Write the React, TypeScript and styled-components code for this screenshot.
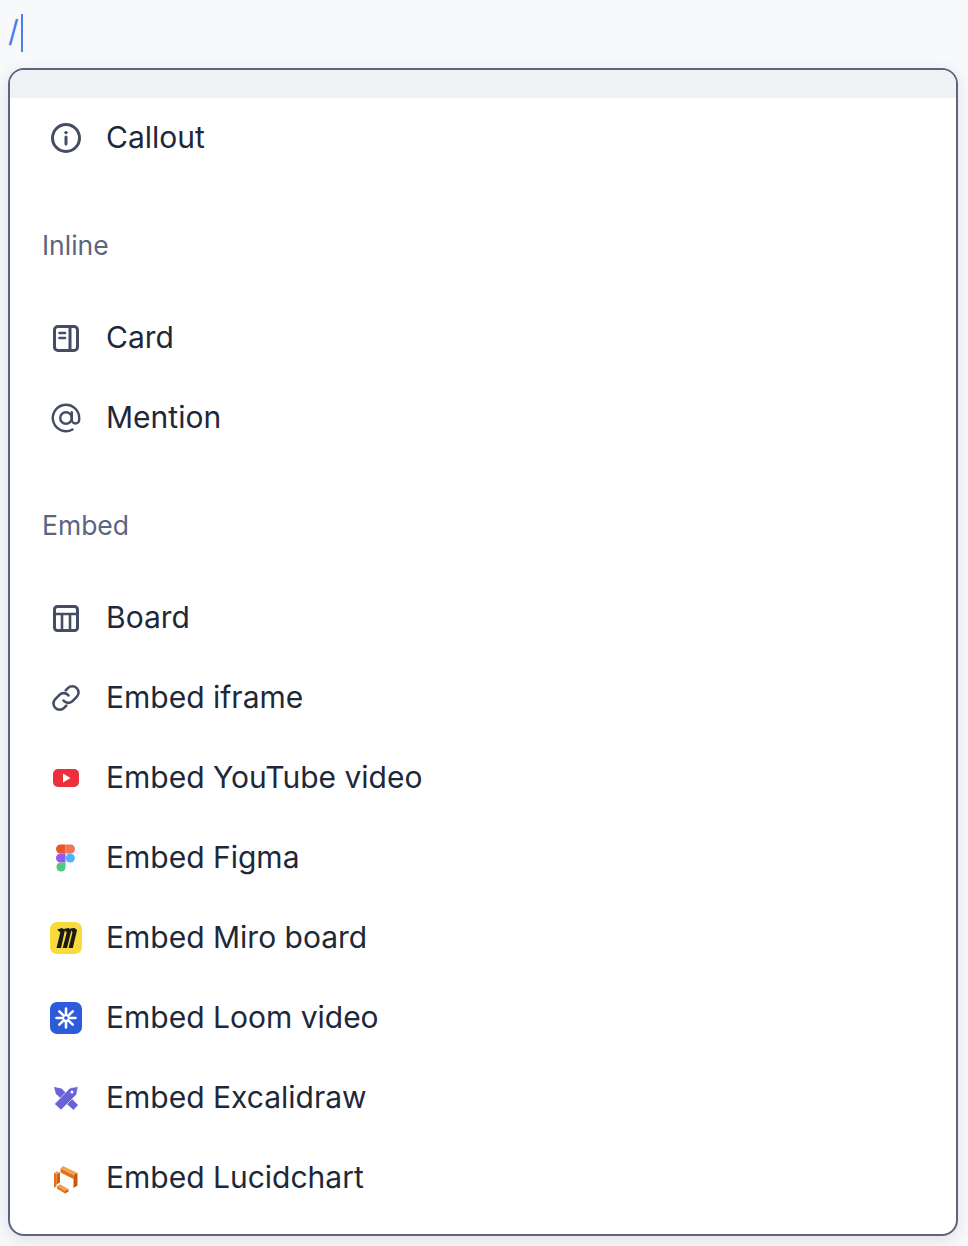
import React from "react";
import styled, { createGlobalStyle } from "styled-components";

const GlobalStyle = createGlobalStyle`
  html, body {
    margin: 0;
    padding: 0;
    background: #f8f9fb;
    font-family: "Inter", "Liberation Sans", sans-serif;
  }
`;

const Page = styled.div`
  width: 968px;
  height: 1246px;
  overflow: hidden;
  box-sizing: border-box;
  padding: 0 10px 0 8px;
`;

const EditorLine = styled.div`
  height: 68px;
  box-sizing: border-box;
  padding-top: 14px;
  display: flex;
  align-items: flex-start;
`;

const Slash = styled.span`
  font-size: 30px;
  line-height: 36px;
  color: #4c7bf6;
  margin-top: -1px;
  margin-right: 2px;
  font-weight: 400;
`;

const Caret = styled.span`
  display: block;
  width: 2px;
  height: 38px;
  background: #4c7bf6;
`;

const Menu = styled.div`
  box-sizing: border-box;
  height: 1168px;
  border: 2px solid #5e6480;
  border-radius: 16px;
  background: #fff;
  overflow: hidden;
  box-shadow: 0 4px 16px rgba(30, 40, 60, 0.12);
`;

const ScrolledRow = styled.div`
  height: 28px;
  background: #f0f1f5;
`;

const Row = styled.div`
  height: 80px;
  display: flex;
  align-items: center;
  padding-left: 40px;
  gap: 24px;
`;

const IconSlot = styled.span`
  width: 32px;
  height: 32px;
  flex: none;
  display: flex;
  align-items: center;
  justify-content: center;
  svg {
    display: block;
  }
`;

const RowLabel = styled.span`
  font-size: 30px;
  line-height: 38px;
  padding-bottom: 2px;
  color: #1e2838;
`;

const Section = styled.div`
  height: 120px;
  box-sizing: border-box;
  padding: 47px 0 0 32px;
  font-size: 26.5px;
  line-height: 40px;
  color: #5c6480;
`;

const stroke = {
  fill: "none",
  stroke: "#444d63",
  strokeWidth: 2.6,
  strokeLinecap: "round" as const,
  strokeLinejoin: "round" as const,
};

const InfoIcon = () => (
  <svg width="32" height="32" viewBox="0 0 32 32">
    <circle cx="16" cy="16" r="13.5" {...stroke} strokeWidth={3} />
    <circle cx="16" cy="10.6" r="1.7" fill="#444d63" />
    <path d="M16 15v7" {...stroke} strokeWidth={3} />
  </svg>
);

const CardIcon = () => (
  <svg width="32" height="32" viewBox="0 0 32 32">
    <rect x="4.5" y="4.5" width="23" height="24" rx="3.5" {...stroke} strokeWidth={3} />
    <path d="M20 5v23" {...stroke} strokeWidth={3} />
    <path d="M9.5 11h5.5M9.5 16h5.5" {...stroke} />
  </svg>
);

const AtIcon = () => (
  <svg width="32" height="32" viewBox="0 0 32 32">
    <circle cx="16" cy="16" r="5.8" {...stroke} strokeWidth={2.4} />
    <path
      d="M21.8 10.2v7.6a3.7 3.7 0 0 0 7.4 0V16A13.2 13.2 0 1 0 22.5 27.5"
      {...stroke}
      strokeWidth={2.4}
    />
  </svg>
);

const BoardIcon = () => (
  <svg width="32" height="32" viewBox="0 0 32 32">
    <rect x="4.5" y="4.5" width="23" height="24" rx="3" {...stroke} strokeWidth={3} />
    <path d="M4.5 12h23M12 12v16M20 12v16" {...stroke} strokeWidth={2.6} />
  </svg>
);

const LinkIcon = () => (
  <svg width="32" height="32" viewBox="0 0 32 32">
    <path
      d="M13.5 18.5a6 6 0 0 0 9 .6l4.2-4.2a6.2 6.2 0 0 0-8.8-8.8l-2.2 2.2"
      {...stroke}
    />
    <path
      d="M18.5 13.5a6 6 0 0 0-9-.6l-4.2 4.2a6.2 6.2 0 0 0 8.8 8.8l2.2-2.2"
      {...stroke}
    />
  </svg>
);

const YoutubeIcon = () => (
  <svg width="32" height="32" viewBox="0 0 32 32">
    <rect x="3" y="7" width="26" height="18" rx="5" fill="#ec2f3a" />
    <path d="M13 11.5v9l7.5-4.5z" fill="#fff" />
  </svg>
);

const FigmaIcon = () => (
  <svg width="32" height="32" viewBox="0 0 32 32">
    <path d="M15.5 2.5h-5a4.5 4.5 0 0 0 0 9h5z" fill="#e8572a" />
    <path d="M15.5 2.5h5a4.5 4.5 0 0 1 0 9h-5z" fill="#f2735f" />
    <path d="M15.5 11.5h-5a4.5 4.5 0 0 0 0 9h5z" fill="#9a55f5" />
    <circle cx="20.2" cy="16" r="4.6" fill="#4db1fb" />
    <path d="M15.5 20.5h-5a4.5 4.5 0 1 0 5 4.5z" fill="#4ccb80" />
  </svg>
);

const MiroIcon = () => (
  <svg width="32" height="32" viewBox="0 0 32 32">
    <rect width="32" height="32" rx="7" fill="#f8dc3d" />
    <g fill="#1b1a14">
      <path d="M7 7.5l5-1.5 3 2L11 26H6.5l3.8-15.500z" />
      <path d="M13.500 7l5-1 3 2L17 26h-4.300l4-15.500z" />
      <path d="M20 6.500l4.500-.5 2.500 2L22.800 26h-4.300l4-15.500z" />
    </g>
  </svg>
);

const LoomIcon = () => (
  <svg width="32" height="32" viewBox="0 0 32 32">
    <rect width="32" height="32" rx="7" fill="#2c5bdb" />
    <g stroke="#fff" strokeLinecap="round">
      <path
        strokeWidth="2.6"
        d="M16 6.5v7M16 18.5v7M6.5 16h7M18.500 16h7M9.300 9.300l4.900 4.900M17.800 17.800l4.900 4.900M22.700 9.300l-4.900 4.900M14.200 17.800l-4.900 4.900"
      />
    </g>
    <circle cx="16" cy="16" r="1.800" fill="#2c5bdb" />
  </svg>
);

const ExcalidrawIcon = () => (
  <svg width="32" height="32" viewBox="0 0 32 32">
    <path d="M4 5l7.500 1.500L28 23l-4.500 5L6 12z" fill="#6a63d8" />
    <path d="M28 4.500l-1.500 8L11 28 4.500 22 20 6z" fill="#6a63d8" stroke="#fff" strokeWidth="0.6" />
    <circle cx="22" cy="10" r="1.500" fill="#fff" />
  </svg>
);

const LucidIcon = () => (
  <svg width="32" height="32" viewBox="0 0 32 32">
    <path d="M13 4l14.500 7-4 2L10.500 6.500z" fill="#f2a24a" />
    <path d="M10.500 6.500l13 6.500V17L10.500 10.500z" fill="#e2701a" />
    <path d="M23.500 13l4-2v12.500l-4 2.500z" fill="#c9590c" />
    <path d="M4 11l3.500-1.800 2.500 1.300-3.500 1.800z" fill="#f2a24a" />
    <path d="M4 11l2.500 1.300V24L4 26z" fill="#e2701a" />
    <path d="M6.500 12.300l3.500-1.800v10l-3.500 2z" fill="#d2620f" />
    <path d="M7 24l3-1.800 8.500 4.800-3.500 2z" fill="#f2a24a" />
    <path d="M7 24l8 5v2.500l-8-5z" fill="#e2701a" />
    <path d="M15 29l3.500-2v2.500l-3.500 2z" fill="#c9590c" />
  </svg>
);

function MenuRow({ icon, label }: { icon: React.ReactNode; label: string }) {
  return (
    <Row>
      <IconSlot>{icon}</IconSlot>
      <RowLabel>{label}</RowLabel>
    </Row>
  );
}

export default function App() {
  return (
    <>
      <GlobalStyle />
      <Page>
        <EditorLine>
          <Slash>/</Slash>
          <Caret />
        </EditorLine>
        <Menu>
          <ScrolledRow />
          <MenuRow icon={<InfoIcon />} label="Callout" />
          <Section>Inline</Section>
          <MenuRow icon={<CardIcon />} label="Card" />
          <MenuRow icon={<AtIcon />} label="Mention" />
          <Section>Embed</Section>
          <MenuRow icon={<BoardIcon />} label="Board" />
          <MenuRow icon={<LinkIcon />} label="Embed iframe" />
          <MenuRow icon={<YoutubeIcon />} label="Embed YouTube video" />
          <MenuRow icon={<FigmaIcon />} label="Embed Figma" />
          <MenuRow icon={<MiroIcon />} label="Embed Miro board" />
          <MenuRow icon={<LoomIcon />} label="Embed Loom video" />
          <MenuRow icon={<ExcalidrawIcon />} label="Embed Excalidraw" />
          <MenuRow icon={<LucidIcon />} label="Embed Lucidchart" />
        </Menu>
      </Page>
    </>
  );
}
